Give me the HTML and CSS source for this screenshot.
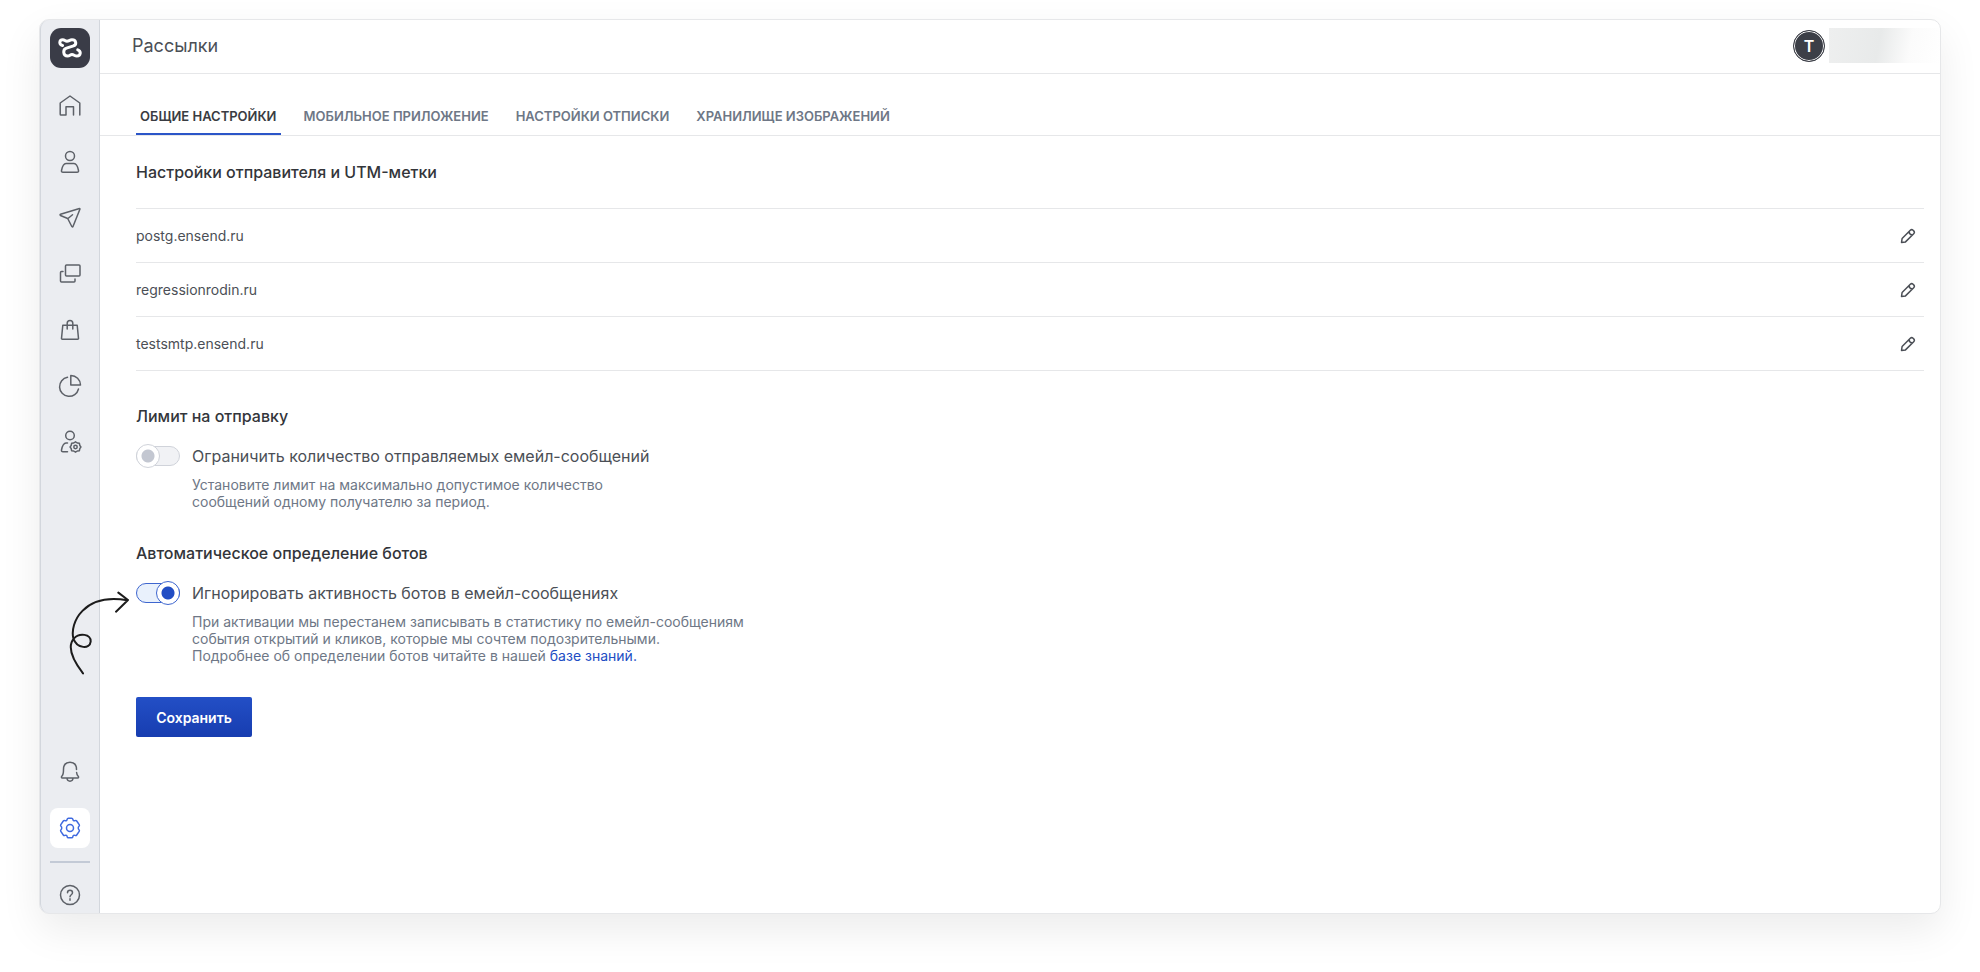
FILE: index.html
```
<!DOCTYPE html>
<html lang="ru">
<head>
  <meta charset="UTF-8" />
  <meta name="viewport" content="width=device-width, initial-scale=1.0" />
  <title>Рассылки</title>
  <link rel="stylesheet" href="styles.css">
</head>
<body>
  <div class="app">
    <nav class="sidebar" aria-label="Главное меню">
      <a class="logo" href="#" aria-label="На главную">
        <svg width="24" height="20" viewBox="0 0 24 20"><path d="M4.500 7.500C.8 6.500 1 1.800 4.800 1.800c2 0 2.200 1.400 4.200 1.400s2.500-1.400 5-1.400c4.500 0 4.800 5 1.500 6L8.500 10.200C4.500 11.500 5 18 9.500 18c2.500 0 2.500-1.500 4.500-1.500s2.500 1.500 4.800 1.500c4.200 0 4.500-5 1-6.200"/></svg>
      </a>
      <a class="nav-item" href="#" aria-label="Главная">
        <svg width="24" height="24" viewBox="0 0 24 24"><path d="M5 21H3a.8.8 0 0 1-.8-.8V9L12 2l9.800 7v12M8 21v-8.200h7.500V21M5 21h3"/></svg>
      </a>
      <a class="nav-item" href="#" aria-label="Контакты">
        <svg width="24" height="24" viewBox="0 0 24 24"><circle cx="12" cy="6" r="4.500"/><path d="M8 13.500h8c2.500 0 3.500 2 4.500 7 .2 1.200-.3 1.800-1.500 1.800H5c-1.200 0-1.700-.6-1.500-1.800 1-5 2-7 4.500-7z"/></svg>
      </a>
      <a class="nav-item" href="#" aria-label="Рассылки">
        <svg width="24" height="24" viewBox="0 0 24 24"><path d="M21.500 2.500 2.500 8.200c-.6.200-.6 1 0 1.300L9.700 12.500l4.100 8c.3.600 1 .5 1.200 0l6.900-17.300c.1-.4-.1-.7-.4-.7zM10 12.500l4.500-3.800"/></svg>
      </a>
      <a class="nav-item" href="#" aria-label="Попапы">
        <svg width="24" height="24" viewBox="0 0 24 24"><rect x="7.500" y="3" width="14.500" height="11" rx="1"/><path d="M5 9.500H3.500a1 1 0 0 0-1 1V19a1 1 0 0 0 1 1H16a1 1 0 0 0 1-1v-2"/></svg>
      </a>
      <a class="nav-item" href="#" aria-label="Магазин">
        <svg width="24" height="24" viewBox="0 0 24 24"><path d="M4.800 7.300h14.400L20.500 20.500a.8.8 0 0 1-.8.8H4.300a.8.8 0 0 1-.8-.8zM9.200 11V5.200a2.800 2.800 0 0 1 5.600 0V11"/></svg>
      </a>
      <a class="nav-item" href="#" aria-label="Отчёты">
        <svg width="24" height="24" viewBox="0 0 24 24"><path d="M9.500 3.300A9.600 9.600 0 1 0 20.500 15M12.800 1.500v9.500h9.700a9.600 9.600 0 0 0-9.700-9.500z"/></svg>
      </a>
      <a class="nav-item" href="#" aria-label="Пользователи">
        <svg width="24" height="24" viewBox="0 0 24 24"><circle cx="12" cy="5.500" r="4.300"/><path d="M9.500 13H8c-2.500 0-3.500 2-4.500 7-.2 1.200.3 1.800 1.500 1.800h4.500"/><circle cx="17.500" cy="17" r="1.700"/><path d="M17.500 11.800l1.800 1.200 2.100.3.400 2 1.100 1.700-1.100 1.700-.4 2-2.100.3-1.800 1.200-1.800-1.200-2.100-.3-.4-2-1.100-1.700 1.100-1.700.4-2 2.100-.3z"/></svg>
      </a>
      <a class="nav-item nav-bottom" href="#" aria-label="Уведомления">
        <svg width="24" height="24" viewBox="0 0 24 24"><path d="M18.500 9.500C18.500 5 16 2.200 12 2.200S5.500 5 5.500 9.500c0 4-.5 5.500-1.500 6.500-.8.800-.8 2 .5 2h15c1.300 0 1.300-1.200.5-2-1-1-1.300-2.500-1.400-3.500M9 18.500c.5 3.500 5.500 3.500 6 0"/></svg>
      </a>
      <a class="nav-item active" href="#" aria-label="Настройки">
        <svg width="24" height="24" viewBox="0 0 24 24"><circle cx="12" cy="12" r="3.500"/><path d="M9.200 3.200C9.300 2.500 9.800 2.200 10.400 2.200h3.200c.6 0 1.100.3 1.200 1 .2 1.500 1 1.900 2.300 1.400.6-.3 1.200-.2 1.600.4l2.500 3.700c.4.600.3 1.100-.2 1.600-1 .9-1 2.500 0 3.400.5.500.6 1 .2 1.600L18.700 19c-.4.600-1 .7-1.600.4-1.300-.5-2.100-.1-2.300 1.400-.1.700-.6 1-1.200 1h-3.200c-.6 0-1.100-.3-1.200-1-.2-1.500-1-1.900-2.300-1.400-.6.300-1.200.2-1.600-.4l-2.500-3.700c-.4-.6-.3-1.100.2-1.600 1-.9 1-2.500 0-3.400-.5-.5-.6-1-.2-1.600L5.300 5c.4-.6 1-.7 1.600-.4 1.300.5 2.100.1 2.300-1.400z"/></svg>
      </a>
      <hr class="nav-divider" />
      <a class="nav-item help" href="#" aria-label="Помощь">
        <svg width="24" height="24" viewBox="0 0 24 24"><circle cx="12" cy="12" r="9.500"/><path d="M9.500 9.800c0-3.300 5-3.300 5 0 0 2-2.500 1.900-2.500 4M12 15.700v1.600"/></svg>
      </a>
    </nav>

    <div class="content">
      <header class="header">
        <h1>Рассылки</h1>
        <div class="account">
          <button type="button" class="avatar">T</button>
          <span class="account-name"></span>
        </div>
      </header>

      <nav class="tabs" aria-label="Разделы настроек">
        <a class="tab active" href="#">Общие настройки</a>
        <a class="tab" href="#">Мобильное приложение</a>
        <a class="tab" href="#">Настройки отписки</a>
        <a class="tab" href="#">Хранилище изображений</a>
      </nav>

      <main class="settings">
        <h2>Настройки отправителя и UTM-метки</h2>
        <ul class="domains">
          <li>
            <span>postg.ensend.ru</span>
            <button type="button" class="edit" aria-label="Изменить postg.ensend.ru">
              <svg width="16" height="16" viewBox="0 0 16 16"><path d="M1.500 14.500l.6-4L10.300 2.300a2 2 0 0 1 2.800 0l.6.600a2 2 0 0 1 0 2.800L5.500 13.900zM9 3.600c.2 2 1.400 3.200 3.400 3.400"/></svg>
            </button>
          </li>
          <li>
            <span>regressionrodin.ru</span>
            <button type="button" class="edit" aria-label="Изменить regressionrodin.ru">
              <svg width="16" height="16" viewBox="0 0 16 16"><path d="M1.500 14.500l.6-4L10.300 2.300a2 2 0 0 1 2.800 0l.6.600a2 2 0 0 1 0 2.800L5.500 13.900zM9 3.600c.2 2 1.400 3.200 3.400 3.400"/></svg>
            </button>
          </li>
          <li>
            <span>testsmtp.ensend.ru</span>
            <button type="button" class="edit" aria-label="Изменить testsmtp.ensend.ru">
              <svg width="16" height="16" viewBox="0 0 16 16"><path d="M1.500 14.500l.6-4L10.300 2.300a2 2 0 0 1 2.800 0l.6.600a2 2 0 0 1 0 2.800L5.500 13.900zM9 3.600c.2 2 1.400 3.200 3.400 3.400"/></svg>
            </button>
          </li>
        </ul>

        <form>
          <section class="group">
            <h2>Лимит на отправку</h2>
            <div class="option">
              <input type="checkbox" class="toggle" id="limit" />
              <label for="limit">Ограничить количество отправляемых емейл-сообщений</label>
            </div>
            <p>Установите лимит на максимально допустимое количество<br />сообщений одному получателю за период.</p>
          </section>

          <section class="group">
            <h2>Автоматическое определение ботов</h2>
            <div class="option">
              <svg class="pointer" width="63" height="85" viewBox="141 60 189 255"><path d="M189 310C160 272 138 232 162 205C178 188 213 191 212 215C210 238 171 237 160 205C149 160 190 68 322 91M295 68L324 90L288 125"/></svg>
              <input type="checkbox" class="toggle" id="bots" checked />
              <label for="bots">Игнорировать активность ботов в емейл-сообщениях</label>
            </div>
            <p>При активации мы перестанем записывать в статистику по емейл-сообщениям<br />события открытий и кликов, которые мы сочтем подозрительными.<br />Подробнее об определении ботов читайте в нашей <a href="#">базе знаний.</a></p>
          </section>

          <button type="submit" class="save">Сохранить</button>
        </form>
      </main>
    </div>
  </div>
</body>
</html>
```
FILE: styles.css
```
*, *::before, *::after {
  box-sizing: border-box;
}
body {
  margin: 0;
  padding: 19px 39px 58px;
  font-family: Inter, "Liberation Sans", sans-serif;
  font-size: 14px;
  color: #4b4f56;
  background-color: #fff;
}
h1, h2, p, ul {
  margin: 0;
  padding: 0;
}
button {
  font-family: inherit;
  cursor: pointer;
}
a {
  color: #214dc4;
  text-decoration: none;
}
svg {
  fill: none;
  stroke: currentColor;
  stroke-linecap: round;
  stroke-linejoin: round;
}
.app {
  display: flex;
  min-height: calc(100vh - 77px);
  border: 1px solid #e6e7e9;
  border-radius: 10px;
  background-color: #fff;
  box-shadow: 0 16px 40px rgba(0, 0, 0, 0.08);
}

/* sidebar */
.sidebar {
  display: flex;
  flex-direction: column;
  align-items: center;
  gap: 16px;
  width: 60px;
  padding-top: 8px;
  border-right: 1px solid #d3d7dd;
  border-left: 1px solid #d3d7dd;
  border-radius: 9px 0 0 9px;
  background-color: #ebedf1;
}
.logo {
  display: flex;
  align-items: center;
  justify-content: center;
  width: 40px;
  height: 40px;
  margin-bottom: 2px;
  border-radius: 11px;
  background-color: #3a3c47;
  color: #fff;
}
.logo svg {
  stroke-width: 3;
}
.nav-item {
  display: flex;
  align-items: center;
  justify-content: center;
  width: 40px;
  height: 40px;
  border-radius: 8px;
  color: #5d6168;
}
.nav-item svg {
  stroke-width: 1.5;
}
.nav-item.active {
  background-color: #fff;
  color: #3f6ae0;
}
.nav-bottom {
  margin-top: auto;
}
.nav-divider {
  width: 40px;
  height: 2px;
  margin: -3px 0 -2px;
  border: none;
  background-color: #c3cad6;
}
.nav-item.help {
  height: 36px;
}

/* header */
.content {
  flex: 1;
  min-width: 0;
}
.header {
  display: flex;
  align-items: center;
  justify-content: space-between;
  height: 54px;
  padding: 0 0 2px 32px;
  border-bottom: 1px solid #e6e7e9;
}
h1 {
  font-size: 18px;
  font-weight: 400;
}
.account {
  display: flex;
  align-items: center;
  gap: 4px;
}
.avatar {
  width: 32px;
  height: 32px;
  padding: 0;
  border: 1px solid #3c3f47;
  border-radius: 50%;
  background-color: #3c3f47;
  box-shadow: inset 0 0 0 1px #fff;
  color: #fff;
  font-size: 16px;
  font-weight: 600;
}
.account-name {
  width: 111px;
  height: 35px;
  background-image: linear-gradient(100deg, #eeefef, #e8eaea 45%, #fbfbfb 72%, #fff);
}

/* tabs */
.tabs {
  display: flex;
  align-items: flex-end;
  gap: 19px;
  height: 62px;
  padding-left: 36px;
  border-bottom: 1px solid #e6e7e9;
}
.tab {
  padding: 0 4px 8px;
  border-bottom: 2px solid transparent;
  color: #6e7786;
  font-size: 13px;
  font-weight: 600;
  line-height: 18px;
  text-transform: uppercase;
}
.tab.active {
  border-color: #2b55c8;
  color: #3a3c42;
}

/* settings */
.settings {
  padding: 26px 16px 26px 36px;
}
h2 {
  color: #33353a;
  font-size: 16px;
  font-weight: 500;
  line-height: 20px;
}
.domains {
  margin: 26px 0 35px;
  border-top: 1px solid #e6e7e9;
  list-style: none;
}
.domains li {
  display: flex;
  align-items: center;
  justify-content: space-between;
  height: 54px;
  padding-right: 8px;
  border-bottom: 1px solid #e6e7e9;
}
.edit {
  display: flex;
  padding: 0;
  border: none;
  background: none;
  color: #4b4f56;
}
.edit svg {
  stroke-width: 1.5;
}
.group {
  margin-bottom: 33px;
}
.option {
  position: relative;
  display: flex;
  align-items: center;
  gap: 12px;
  height: 24px;
  margin: 18px 0 8px;
  font-size: 16px;
}
.group p {
  padding-left: 56px;
  color: #6e7786;
  line-height: 17px;
}
.toggle {
  appearance: none;
  position: relative;
  width: 44px;
  height: 20px;
  margin: 0;
  border: 1px solid #d0d3da;
  border-radius: 10px;
  background-color: #f1f2f5;
  cursor: pointer;
}
.toggle::after {
  content: "";
  position: absolute;
  top: -3px;
  left: -1px;
  width: 24px;
  height: 24px;
  border: 1px solid #d0d3da;
  border-radius: 50%;
  background: radial-gradient(circle, #c3c7d1 6px, #fff 7px);
}
.toggle:checked {
  border-color: #3e66cf;
  background-color: #e9f1fc;
}
.toggle:checked::after {
  left: 19px;
  border-color: #3e66cf;
  background: radial-gradient(circle, #214dc4 6px, #fff 7px);
}
.pointer {
  position: absolute;
  top: 9px;
  left: -69px;
  color: #1c1c1c;
  stroke-width: 6;
}
.save {
  width: 116px;
  height: 40px;
  border: none;
  border-radius: 2px;
  background-image: linear-gradient(#234fc6, #173db0);
  color: #fff;
  font-size: 14px;
  font-weight: 600;
}
```
